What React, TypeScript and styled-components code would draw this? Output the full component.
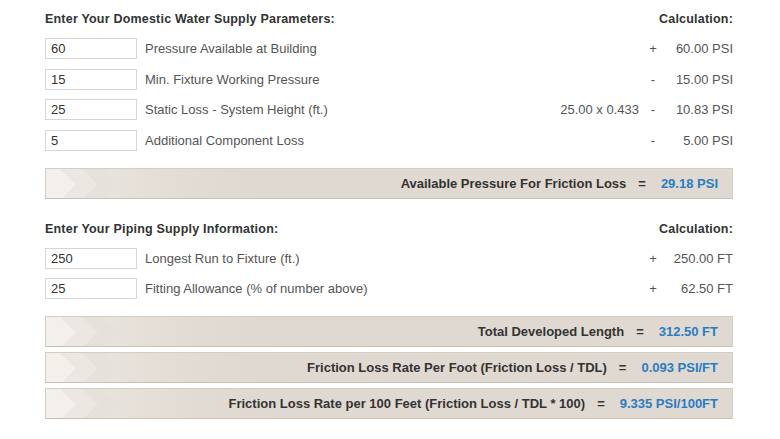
import styled, { createGlobalStyle } from "styled-components";

const GlobalStyle = createGlobalStyle`
  html, body {
    margin: 0;
    padding: 0;
    background: #ffffff;
  }
  body {
    font-family: "Liberation Sans", Arial, sans-serif;
  }
`;

const Page = styled.div`
  width: 780px;
  height: 439px;
  padding: 11px 47px 0 45px;
  box-sizing: border-box;
  overflow: hidden;
`;

const Section = styled.section<{ $gap?: number }>`
  margin-top: ${(p) => p.$gap ?? 0}px;
`;

const HeadRow = styled.div`
  display: flex;
  justify-content: space-between;
  align-items: center;
  height: 16px;
  font-size: 12.5px;
  font-weight: 700;
  letter-spacing: 0.2px;
  color: #333333;
  margin-bottom: 11px;
`;

const Row = styled.div`
  display: grid;
  grid-template-columns: 92px 1fr auto 28px 66px;
  align-items: center;
  height: 21px;
  margin-bottom: 9.6px;
  font-size: 13px;
  color: #555555;
`;

const Input = styled.input`
  box-sizing: border-box;
  width: 92px;
  height: 21px;
  border: 1px solid #d6d6d6;
  padding: 0 5px;
  font-family: inherit;
  font-size: 13px;
  color: #333333;
  background: #ffffff;
  outline: none;
`;

const Label = styled.span`
  padding-left: 8px;
`;

const Formula = styled.span`
  text-align: right;
`;

const Sign = styled.span`
  text-align: center;
`;

const Value = styled.span`
  text-align: right;
`;

const Bars = styled.div`
  display: flex;
  flex-direction: column;
  gap: 5px;
`;

const Bar = styled.div`
  position: relative;
  display: flex;
  justify-content: flex-end;
  align-items: center;
  height: 31px;
  box-sizing: border-box;
  padding-right: 14px;
  background: #e0d9d1;
  border-top: 1px solid #d4cdc4;
  border-bottom: 1px solid #c8c0b6;
  border-left: 1px solid #d6cfc6;
  border-right: 1px solid #d6cfc6;
  font-size: 13px;
  font-weight: 700;
  color: #333333;
  overflow: hidden;
`;

const Arrows = styled.svg`
  position: absolute;
  left: 0;
  top: 0;
`;

const BarText = styled.span`
  position: relative;
`;

const Eq = styled.span`
  position: relative;
  margin: 0 15px 0 12px;
`;

const Result = styled.span`
  position: relative;
  color: #2a7cc2;
`;

const Chevrons = () => (
  <Arrows width="240" height="31" viewBox="0 0 240 31">
    <defs>
      <linearGradient id="fade" x1="0" y1="0" x2="1" y2="0">
        <stop offset="0" stopColor="#f2eeea" stopOpacity="0.9" />
        <stop offset="0.5" stopColor="#e8e2dc" stopOpacity="0.5" />
        <stop offset="1" stopColor="#e0d9d1" stopOpacity="0" />
      </linearGradient>
    </defs>
    <rect x="0" y="0" width="240" height="31" fill="url(#fade)" />
    <polygon points="0,0 14,0 30,15.5 14,31 0,31" fill="#f3f0ec" />
    <polygon points="14,0 36,0 52,15.5 36,31 14,31 30,15.5" fill="#ece7e2" />
    <polygon points="36,0 57,0 73,15.5 57,31 36,31 52,15.5" fill="#e7e1db" />
  </Arrows>
);

type InputRow = {
  value: string;
  label: string;
  formula?: string;
  sign: string;
  result: string;
};

const waterRows: InputRow[] = [
  { value: "60", label: "Pressure Available at Building", sign: "+", result: "60.00 PSI" },
  { value: "15", label: "Min. Fixture Working Pressure", sign: "-", result: "15.00 PSI" },
  {
    value: "25",
    label: "Static Loss - System Height (ft.)",
    formula: "25.00 x 0.433",
    sign: "-",
    result: "10.83 PSI",
  },
  { value: "5", label: "Additional Component Loss", sign: "-", result: "5.00 PSI" },
];

const pipeRows: InputRow[] = [
  { value: "250", label: "Longest Run to Fixture (ft.)", sign: "+", result: "250.00 FT" },
  { value: "25", label: "Fitting Allowance (% of number above)", sign: "+", result: "62.50 FT" },
];

const Rows = ({ rows }: { rows: InputRow[] }) => (
  <>
    {rows.map((r) => (
      <Row key={r.label}>
        <Input defaultValue={r.value} />
        <Label>{r.label}</Label>
        <Formula>{r.formula ?? ""}</Formula>
        <Sign>{r.sign}</Sign>
        <Value>{r.result}</Value>
      </Row>
    ))}
  </>
);

const ResultBar = ({ label, value }: { label: string; value: string }) => (
  <Bar>
    <Chevrons />
    <BarText>{label}</BarText>
    <Eq>=</Eq>
    <Result>{value}</Result>
  </Bar>
);

export default function App() {
  return (
    <>
      <GlobalStyle />
      <Page>
        <Section>
          <HeadRow>
            <span>Enter Your Domestic Water Supply Parameters:</span>
            <span>Calculation:</span>
          </HeadRow>
          <Rows rows={waterRows} />
        </Section>
        <Section $gap={17}>
          <Bars>
            <ResultBar label="Available Pressure For Friction Loss" value="29.18 PSI" />
          </Bars>
        </Section>
        <Section $gap={22}>
          <HeadRow>
            <span>Enter Your Piping Supply Information:</span>
            <span>Calculation:</span>
          </HeadRow>
          <Rows rows={pipeRows} />
        </Section>
        <Section $gap={17}>
          <Bars>
            <ResultBar label="Total Developed Length" value="312.50 FT" />
            <ResultBar
              label="Friction Loss Rate Per Foot (Friction Loss / TDL)"
              value="0.093 PSI/FT"
            />
            <ResultBar
              label="Friction Loss Rate per 100 Feet (Friction Loss / TDL * 100)"
              value="9.335 PSI/100FT"
            />
          </Bars>
        </Section>
      </Page>
    </>
  );
}
